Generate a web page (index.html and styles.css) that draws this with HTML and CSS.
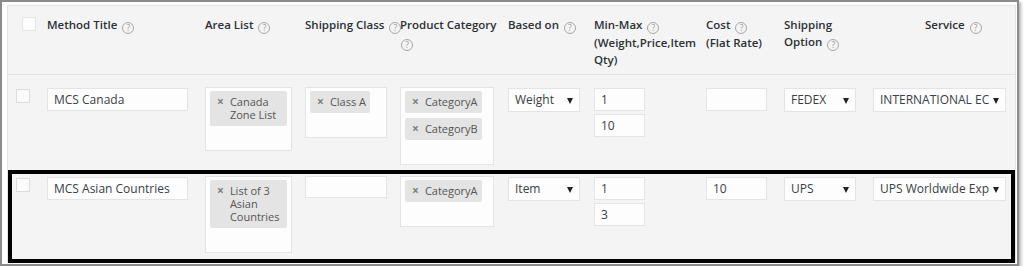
FILE: index.html
```html
<!DOCTYPE html>
<html lang="en">
<head>
<meta charset="utf-8">
<title>Shipping Methods</title>
<link rel="stylesheet" href="styles.css">
</head>
<body>
<div class="frame">
  <div class="rules">
    <div class="row head">
      <div class="cell"><span class="check check-head"></span></div>
      <div class="cell">Method Title<span class="help">?</span></div>
      <div class="cell">Area List<span class="help">?</span></div>
      <div class="cell">Shipping Class<span class="help">?</span></div>
      <div class="cell">Product Category<br><span class="help help-first">?</span></div>
      <div class="cell">Based on<span class="help">?</span></div>
      <div class="cell">Min-Max<span class="help">?</span><br>(Weight,Price,Item<br>Qty)</div>
      <div class="cell">Cost<span class="help">?</span><br>(Flat Rate)</div>
      <div class="cell">Shipping<br>Option<span class="help">?</span></div>
      <div class="cell cell-service">Service<span class="help">?</span></div>
    </div>

    <div class="row body first">
      <div class="cell"><span class="check"></span></div>
      <div class="cell"><input class="field w-title" type="text" value="MCS Canada"></div>
      <div class="cell">
        <div class="multi w-area">
          <span class="tag"><span class="x">×</span><span class="tag-text">Canada Zone List</span></span>
          <span class="search"></span>
        </div>
      </div>
      <div class="cell">
        <div class="multi w-class">
          <span class="tag"><span class="x">×</span><span class="tag-text">Class A</span></span>
          <span class="search"></span>
        </div>
      </div>
      <div class="cell">
        <div class="multi w-cat">
          <span class="tag"><span class="x">×</span><span class="tag-text">CategoryA</span></span>
          <span class="tag"><span class="x">×</span><span class="tag-text">CategoryB</span></span>
          <span class="search"></span>
        </div>
      </div>
      <div class="cell"><div class="select w-based"><span class="select-value">Weight</span></div></div>
      <div class="cell">
        <div class="stack">
          <input class="field w-min" type="text" value="1">
          <input class="field w-min" type="text" value="10">
        </div>
      </div>
      <div class="cell"><input class="field w-cost" type="text" value=""></div>
      <div class="cell"><div class="select w-option"><span class="select-value">FEDEX</span></div></div>
      <div class="cell"><div class="select w-service"><span class="select-value">INTERNATIONAL ECONOMY</span></div></div>
    </div>

    <div class="row body marked">
      <div class="cell"><span class="check"></span></div>
      <div class="cell"><input class="field w-title" type="text" value="MCS Asian Countries"></div>
      <div class="cell">
        <div class="multi w-area">
          <span class="tag"><span class="x">×</span><span class="tag-text">List of 3 Asian Countries</span></span>
          <span class="search"></span>
        </div>
      </div>
      <div class="cell">
        <div class="multi multi-empty w-class">
          <span class="search"></span>
        </div>
      </div>
      <div class="cell">
        <div class="multi w-cat">
          <span class="tag"><span class="x">×</span><span class="tag-text">CategoryA</span></span>
          <span class="search"></span>
        </div>
      </div>
      <div class="cell"><div class="select w-based"><span class="select-value">Item</span></div></div>
      <div class="cell">
        <div class="stack">
          <input class="field w-min" type="text" value="1">
          <input class="field w-min" type="text" value="3">
        </div>
      </div>
      <div class="cell"><input class="field w-cost" type="text" value="10"></div>
      <div class="cell"><div class="select w-option"><span class="select-value">UPS</span></div></div>
      <div class="cell"><div class="select w-service"><span class="select-value">UPS Worldwide Express</span></div></div>
    </div>
  </div>
</div>
</body>
</html>
```

FILE: styles.css
```css
* {
  box-sizing: border-box;
}

body {
  margin: 0;
  background: #fff;
  font-family: "Open Sans", "Noto Sans", sans-serif;
  color: #32373c;
}

/* outer framed card */
.frame {
  width: max-content;
  border: 2px solid #8b8b8b;
  padding: 3px 1px 1px 5px;
  background: #fff;
  box-shadow: 2px 2px 3px rgba(0, 0, 0, 0.3);
}

.rules {
  width: 1009px;
  border: 1px solid #e3e3e3;
  background: #f4f4f4;
}

.row {
  display: grid;
  grid-template-columns: 39px 158px 100px 95px 108px 86px 112px 78px 89px 142px;
  align-items: start;
}

/* header row */
.head {
  padding: 10px 0 6px;
  border-bottom: 1px solid #e2e2e2;
  font-size: 11.5px;
  font-weight: 600;
  line-height: 17px;
  color: #2c3035;
  white-space: nowrap;
}

.cell-service {
  padding-left: 52px;
}

.help {
  display: inline-block;
  width: 12px;
  height: 12px;
  margin-left: 5px;
  border: 1px solid #a8a8a8;
  border-radius: 50%;
  color: #999;
  font-size: 8.5px;
  font-weight: 400;
  line-height: 10px;
  text-align: center;
  vertical-align: -2px;
}

.help-first {
  margin-left: 1px;
}

/* body rows */
.body.first {
  padding: 13px 0 5px;
}

.body.marked {
  position: relative;
  padding: 7px 0 9px;
}

/* highlight frame drawn over the second rule */
.body.marked::after {
  content: "";
  position: absolute;
  top: 0;
  left: 0;
  right: 0;
  bottom: -1px;
  border: 4px solid #000;
  pointer-events: none;
}

.check {
  display: block;
  width: 14px;
  height: 14px;
  margin: 1px 0 0 8px;
  border: 1px solid #dcdcdc;
  background: #fbfbfb;
}

.check-head {
  margin: 1px 0 0 14px;
  border-color: #e6e6e6;
  background: #fdfdfd;
}

.field {
  display: block;
  height: 23px;
  margin: 0;
  padding: 0 6px;
  border: 1px solid #e4e4e4;
  background: #fdfdfd;
  font-family: "Open Sans", "Noto Sans", sans-serif;
  font-size: 12px;
  color: #3a3f44;
  outline: none;
}

.w-title { width: 141px; }
.w-min { width: 51px; }
.w-cost { width: 61px; }

.stack {
  display: flex;
  flex-direction: column;
  gap: 3px;
}

/* multi-select boxes with tags */
.multi {
  display: flex;
  flex-direction: column;
  align-items: flex-start;
  margin-top: -1px;
  padding: 3px 4px 0;
  border: 1px solid #e4e4e4;
  background: #fdfdfd;
}

.multi-empty {
  padding-top: 0;
}

.w-area { width: 87px; }
.w-class { width: 82px; }
.w-cat { width: 94px; }

.tag {
  display: flex;
  max-width: 100%;
  margin-bottom: 5px;
  padding: 4px 4px 5px 7px;
  border-radius: 2px;
  background: #e4e4e4;
  font-size: 11px;
  line-height: 13px;
  color: #555;
}

.tag .x {
  flex: none;
  margin-right: 6px;
  font-size: 12px;
  font-weight: 700;
  color: #7d7d7d;
}

.search {
  display: block;
  height: 19px;
}

.multi-empty .search {
  height: 20px;
}

/* single selects */
.select {
  position: relative;
  height: 24px;
  padding: 0 16px 0 6px;
  border: 1px solid #e4e4e4;
  background: #fdfdfd;
  font-size: 12px;
  line-height: 22px;
  color: #3a3f44;
  white-space: nowrap;
}

.select-value {
  display: block;
  overflow: hidden;
}

.select::after {
  content: "";
  position: absolute;
  top: 9px;
  right: 6px;
  border-left: 3.5px solid transparent;
  border-right: 3.5px solid transparent;
  border-top: 6px solid #222;
}

.w-based { width: 72px; }
.w-option { width: 72px; }
.w-service { width: 133px; }
```
